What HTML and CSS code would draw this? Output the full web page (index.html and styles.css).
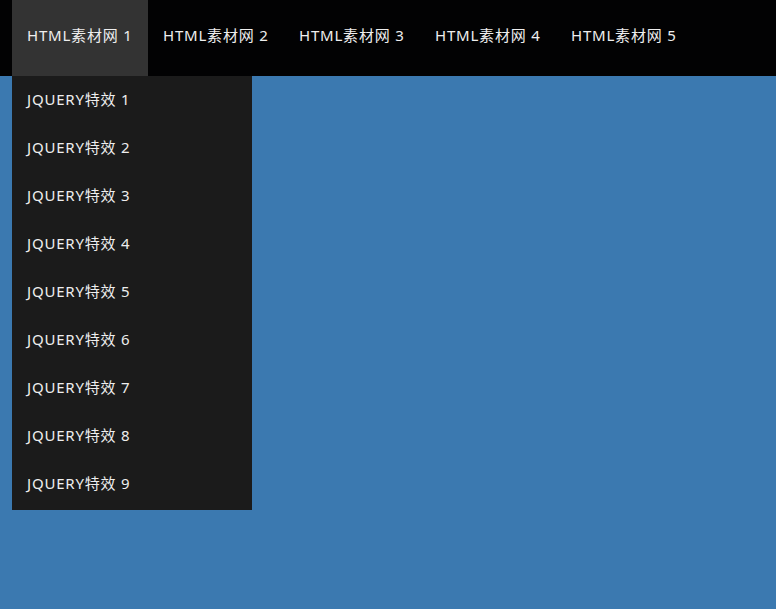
FILE: index.html
```html
<!DOCTYPE html>
<html lang="zh-CN">
<head>
    <meta charset="UTF-8">
    <meta name="viewport" content="width=device-width, initial-scale=1.0">
    <title>下拉菜单</title>
    <link rel="stylesheet" href="styles.css">
</head>
<body>
    <!-- Top navigation -->
    <nav class="nav">
        <ul class="menu">
            <li class="menu-item active">
                <a href="#">HTML素材网 1</a>
                <ul class="dropdown">
                    <li><a href="#">JQUERY特效 1</a></li>
                    <li><a href="#">JQUERY特效 2</a></li>
                    <li><a href="#">JQUERY特效 3</a></li>
                    <li><a href="#">JQUERY特效 4</a></li>
                    <li><a href="#">JQUERY特效 5</a></li>
                    <li><a href="#">JQUERY特效 6</a></li>
                    <li><a href="#">JQUERY特效 7</a></li>
                    <li><a href="#">JQUERY特效 8</a></li>
                    <li><a href="#">JQUERY特效 9</a></li>
                </ul>
            </li>
            <li class="menu-item"><a href="#">HTML素材网 2</a></li>
            <li class="menu-item"><a href="#">HTML素材网 3</a></li>
            <li class="menu-item"><a href="#">HTML素材网 4</a></li>
            <li class="menu-item"><a href="#">HTML素材网 5</a></li>
        </ul>
    </nav>
</body>
</html>
```

FILE: styles.css
```css
body {
    margin: 0;
    font-family: "Noto Sans", "Noto Sans CJK SC", sans-serif;
    background: #3b79b0;
    min-height: 609px;
}

ul {
    list-style: none;
    margin: 0;
    padding: 0;
}

a {
    color: #eeeeee;
    text-decoration: none;
}

.nav {
    background: #020203;
    height: 76px;
}

.menu {
    display: flex;
    padding-left: 12px;
}

.menu-item {
    position: relative;
    width: 136px;
}

.menu-item > a {
    display: block;
    height: 76px;
    line-height: 70px;
    padding-left: 15px;
    font-size: 15px;
    letter-spacing: 0.8px;
}

.menu-item.active > a {
    background: #333333;
}

.dropdown {
    position: absolute;
    top: 76px;
    left: 0;
    width: 240px;
    padding-bottom: 2px;
    background: #1b1b1b;
}

.dropdown a {
    display: block;
    height: 48px;
    line-height: 46px;
    padding-left: 15px;
    font-size: 15px;
    letter-spacing: 0.8px;
}
```
